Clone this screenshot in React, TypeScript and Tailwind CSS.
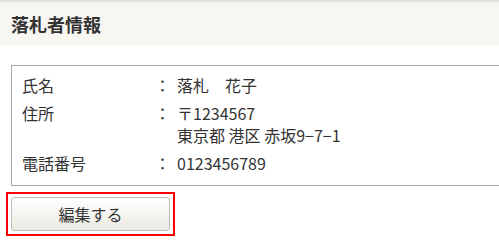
import React from 'react';

const rows = [
  { label: '氏名', value: ['落札　花子'] },
  { label: '住所', value: ['〒1234567', '東京都 港区 赤坂9−7−1'] },
  { label: '電話番号', value: ['0123456789'] },
];

export default function App() {
  return (
    <div
      className="w-[499px] h-[245px] bg-white text-[#333] overflow-hidden"
      style={{ fontFamily: '"Noto Sans CJK JP", "Noto Sans", sans-serif' }}
    >
      <div className="border-t-2 border-[#e2e0da] bg-[#f7f6f1] h-[45px] flex items-center pl-[11px]">
        <h2 className="text-[18px] font-bold leading-none">落札者情報</h2>
      </div>

      <div className="ml-[11px] mt-[20px] w-[500px] border border-[#a9a9a9] pt-[5px] pb-[8px] pl-[10px]">
        {rows.map((r) => (
          <div key={r.label} className="flex text-[16px] leading-[22px] py-[3px]">
            <div className="w-[126px]">{r.label}</div>
            <div className="w-[29px] text-center">：</div>
            <p>
              {r.value.map((v, i) => (
                <React.Fragment key={v}>
                  {i > 0 && <br />}
                  {v}
                </React.Fragment>
              ))}
            </p>
          </div>
        ))}
      </div>

      <div className="mt-[6px] ml-[6px] w-[169px] h-[44px] border-2 border-[#ff0000] p-[3px]">
        <button className="w-full h-full rounded-[3px] border border-[#bdbdbd] bg-gradient-to-b from-white to-[#ebeae2] text-[16px] text-[#333]">
          編集する
        </button>
      </div>
    </div>
  );
}
